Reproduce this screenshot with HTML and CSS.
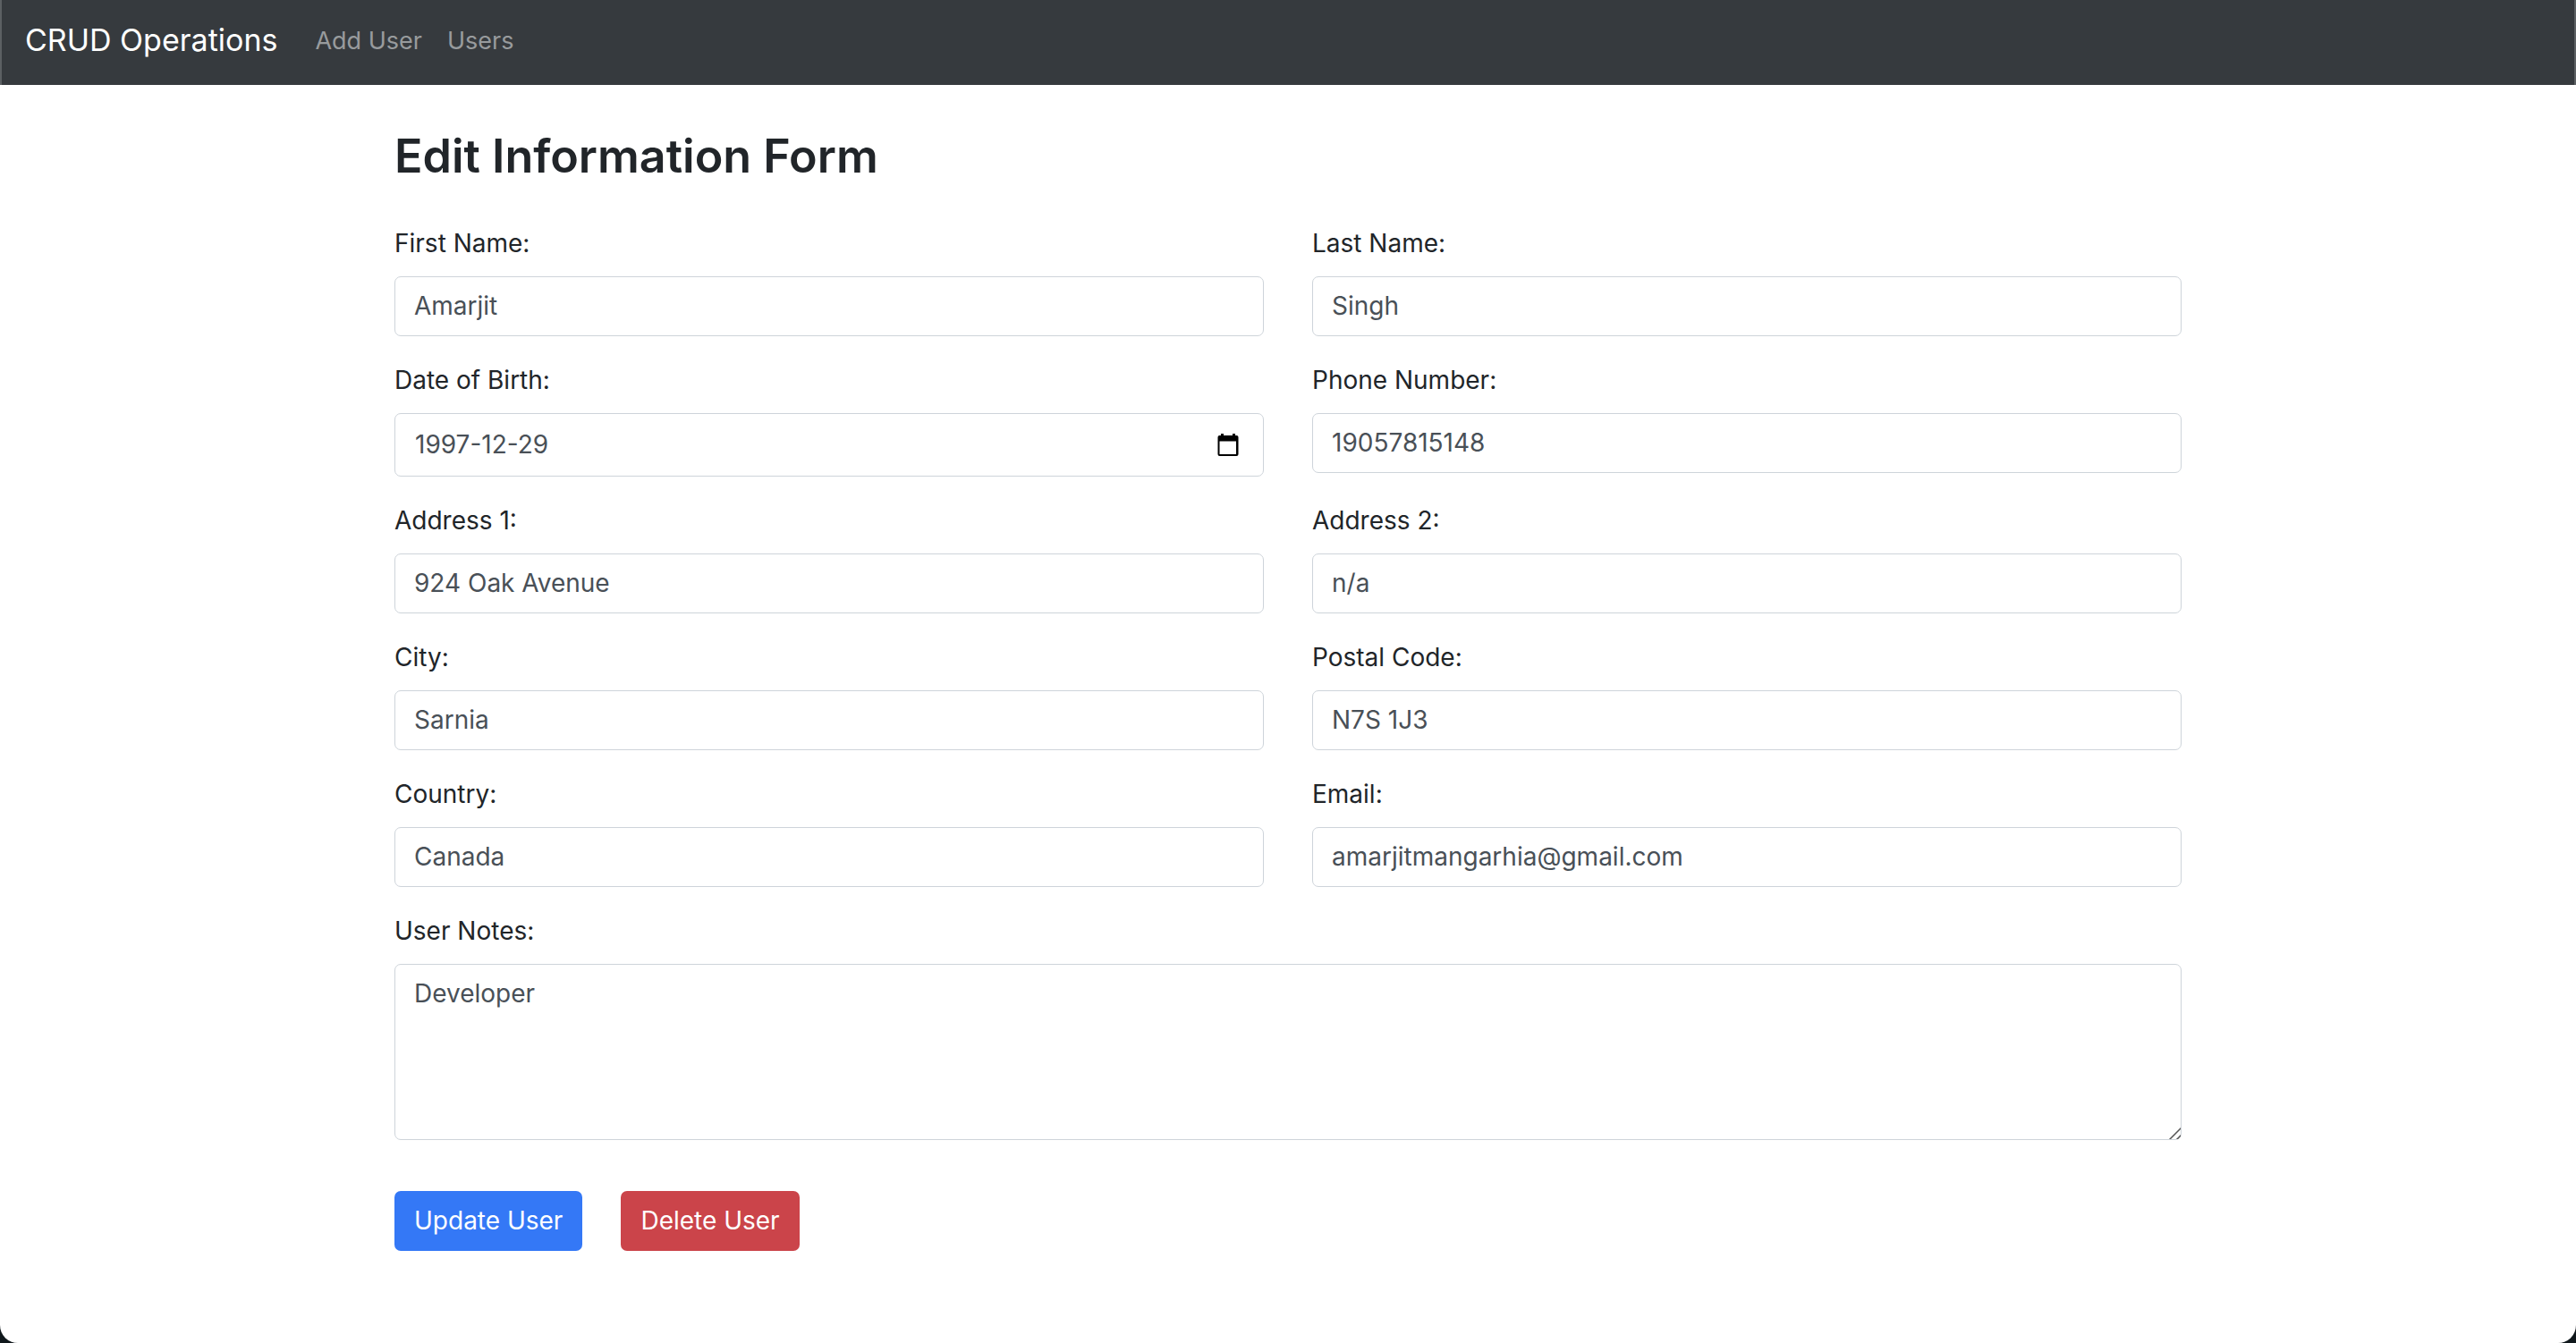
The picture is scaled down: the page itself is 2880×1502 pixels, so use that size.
FILE: index.html
```html
<!DOCTYPE html>
<html lang="en">
<head>
<meta charset="utf-8">
<title>CRUD Operations</title>
<link rel="stylesheet" href="styles.css">
</head>
<body>
<div class="window">
  <nav class="navbar">
    <a class="brand" href="#">CRUD Operations</a>
    <a class="nav-link" href="#">Add User</a>
    <a class="nav-link" href="#">Users</a>
  </nav>
  <main class="container">
    <h1 class="title">Edit Information Form</h1>
    <form class="form">
      <div class="field"><label for="first">First Name:</label><input class="control" id="first" type="text" value="Amarjit"></div>
      <div class="field"><label for="last">Last Name:</label><input class="control" id="last" type="text" value="Singh"></div>
      <div class="field"><label for="dob">Date of Birth:</label>
        <div class="control date">
          <input class="date-input" id="dob" type="text" value="1997-12-29">
          <button class="picker" type="button" aria-label="Choose date">
            <svg viewBox="0 0 24 26" width="24" height="26"><path fill="#000" fill-rule="evenodd" d="M4 0h3v2h10V0h3v2h1.500a2 2 0 0 1 2 2v19a2 2 0 0 1-2 2h-19a2 2 0 0 1-2-2V4a2 2 0 0 1 2-2H4zM2.500 8.500v14.500h18.500V8.500z"/></svg>
          </button>
        </div>
      </div>
      <div class="field"><label for="phone">Phone Number:</label><input class="control" id="phone" type="tel" value="19057815148"></div>
      <div class="field"><label for="addr1">Address 1:</label><input class="control" id="addr1" type="text" value="924 Oak Avenue"></div>
      <div class="field"><label for="addr2">Address 2:</label><input class="control" id="addr2" type="text" value="n/a"></div>
      <div class="field"><label for="city">City:</label><input class="control" id="city" type="text" value="Sarnia"></div>
      <div class="field"><label for="postal">Postal Code:</label><input class="control" id="postal" type="text" value="N7S 1J3"></div>
      <div class="field"><label for="country">Country:</label><input class="control" id="country" type="text" value="Canada"></div>
      <div class="field"><label for="email">Email:</label><input class="control" id="email" type="email" value="amarjitmangarhia@gmail.com"></div>
      <div class="field wide"><label for="notes">User Notes:</label><textarea class="control notes" id="notes" rows="4">Developer</textarea></div>
      <div class="actions wide">
        <button class="btn primary" type="submit">Update User</button>
        <button class="btn danger" type="button">Delete User</button>
      </div>
    </form>
  </main>
</div>
</body>
</html>
```
FILE: styles.css
```css
* { box-sizing: border-box; }
body {
  margin: 0;
  background: #10181c;
  color: #212529;
  font: 400 28px/43px Inter, "Liberation Sans", sans-serif;
}
.window {
  min-height: 100vh;
  background: #fff;
  border-radius: 0 0 20px 20px;
  overflow: hidden;
}
.navbar {
  display: flex;
  align-items: center;
  padding: 15px 26px 20px;
  background: #363a3e;
  border: solid #5c6063;
  border-width: 0 2px;
}
.brand {
  margin-right: 28px;
  color: #fff;
  font-size: 34px;
  line-height: 60px;
  text-decoration: none;
}
.nav-link {
  padding: 0 14px;
  color: #989b9d;
  font-size: 27px;
  text-decoration: none;
}
.container {
  width: 100%;
  max-width: 2052px;
  margin: 0 auto;
  padding: 46px 27px;
}
.title {
  margin: 0 0 42px;
  font-size: 52px;
  line-height: 68px;
  font-weight: 600;
}
.form {
  display: grid;
  grid-template-columns: 1fr 1fr;
  gap: 28px 54px;
  align-items: start;
}
.wide { grid-column: 1 / -1; }
.field {
  display: flex;
  flex-direction: column;
  gap: 15px;
}
.control {
  width: 100%;
  margin: 0;
  padding: 11px 21px;
  border: 1px solid #ced4da;
  border-radius: 7px;
  background: #fff;
  color: #495057;
  font: inherit;
}
.date {
  display: flex;
  align-items: center;
  padding: 13px 27px 13px 22px;
}
.date-input {
  flex: 1;
  min-width: 0;
  padding: 0;
  border: 0;
  background: none;
  color: inherit;
  font: inherit;
}
.picker {
  display: flex;
  padding: 0;
  border: 0;
  background: none;
}
.notes {
  display: block;
  height: 197px;
  resize: vertical;
}
.notes::-webkit-scrollbar {
  width: 18px;
  height: 18px;
}
.notes::-webkit-resizer {
  background: url("data:image/svg+xml,%3Csvg xmlns='http://www.w3.org/2000/svg' width='18' height='18'%3E%3Cpath d='M2 16L15.500 2.500M10 16l5.500-5.500' stroke='%23555' stroke-width='1.500'/%3E%3C/svg%3E") no-repeat;
}
.actions {
  display: flex;
  gap: 43px;
  padding-top: 29px;
}
.btn {
  padding: 12px 22px;
  border: 0;
  border-radius: 7px;
  color: #fff;
  font: inherit;
}
.primary { background: #3478f6; }
.danger { background: #cb444a; }
```
